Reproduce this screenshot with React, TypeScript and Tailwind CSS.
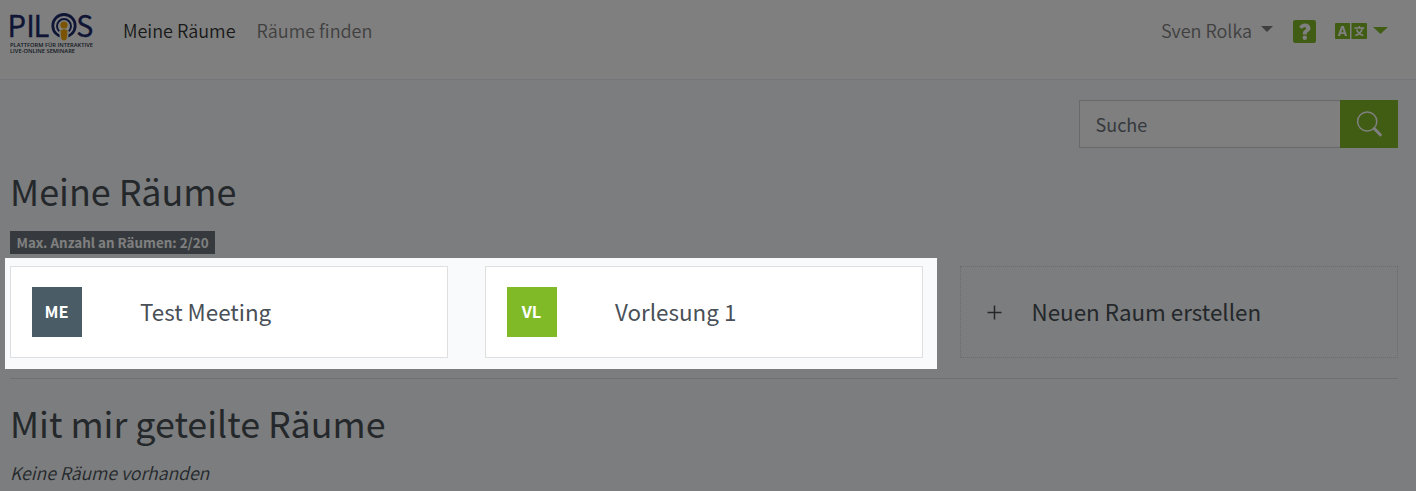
import React from "react";

function Logo() {
  return (
    <svg className="h-[44px] w-[84px] shrink-0 overflow-visible" viewBox="0 0 84 44" aria-label="PILOS">
      <g fill="#1d2a6b" stroke="#1d2a6b" strokeWidth="0.35" fontFamily="'Noto Sans CJK SC', sans-serif" fontWeight="400" fontSize="29.2">
        <text x="-2.5" y="27">P</text>
        <text x="16.200" y="27">I</text>
        <text x="23.400" y="27">L</text>
        <text x="66.300" y="27" textLength="17" lengthAdjust="spacingAndGlyphs">S</text>
      </g>
      <circle cx="54" cy="15.7" r="11.2" fill="none" stroke="#1d2a6b" strokeWidth="2.8" />
      <rect x="49.6" y="22" width="8.8" height="8" fill="#fff" />
      <path d="M49.2 21.2A7 7 0 1 1 58.8 21.2" fill="none" stroke="#1d2a6b" strokeWidth="2" />
      <circle cx="54" cy="15" r="3.6" fill="#f5a800" />
      <path d="M50.5 20.5q3.500-2.400 7 0l-.7 7.500q-.3 2.600-2.800 2.600t-2.800-2.600z" fill="#f5a800" />
      <g fill="#1f3445" fontFamily="'Open Sans', sans-serif" fontWeight="600" fontSize="4.9">
        <text x="0" y="36.7" textLength="83" lengthAdjust="spacingAndGlyphs">PLATTFORM FÜR INTERAKTIVE</text>
        <text x="0" y="43.1" textLength="65" lengthAdjust="spacingAndGlyphs">LIVE-ONLINE SEMINARE</text>
      </g>
    </svg>
  );
}

function Caret({ className }: { className: string }) {
  return (
    <svg className={className} viewBox="0 0 12 6" preserveAspectRatio="none" fill="currentColor">
      <path d="M0 0h12L6 6z" />
    </svg>
  );
}

function Header() {
  return (
    <header className="flex h-20 items-start border-b border-[#eaecf3] bg-white pl-[10px] pr-[28px] text-[18px] font-[350] leading-[30px] text-[#7f7f7f]">
      <div className="pt-[10px]">
        <Logo />
      </div>
      <nav className="ml-[29px] flex gap-[21px] pt-[15px]">
        <a className="text-[#333333]">Meine Räume</a>
        <a>Räume finden</a>
      </nav>
      <div className="ml-auto flex pt-[15px]">
        <span>Sven Rolka</span>
        <Caret className="ml-[9px] mt-[11px] h-[6px] w-[12px]" />
        <svg className="ml-5 mt-[5px] h-[23px] w-[23px] text-[#80ba27]" viewBox="0 0 448 448">
          <rect width="448" height="448" rx="44" fill="currentColor" />
          <path d="M117 137C145 94 181 70 232 70c60 0 108 38 108 91 0 66-70 71-70 107v16h-78v-20c0-64 64-72 64-101 0-15-12-24-30-24-20 0-33 11-49 30z" fill="#fff" />
          <circle cx="230" cy="346" r="44" fill="#fff" />
        </svg>
        <svg className="ml-[19px] mt-2 h-4 w-8 text-[#80ba27]" viewBox="0 0 32 16">
          <path d="M1 0h14v16H1a1 1 0 0 1-1-1V1a1 1 0 0 1 1-1zM16.5 0H31a1 1 0 0 1 1 1v14a1 1 0 0 1-1 1H16.5z" fill="currentColor" />
          <path fillRule="evenodd" d="M6.200 3h2.600l3.300 10H9.800l-.6-2H5.700l-.6 2H2.800zM7.500 5.500 6.300 9.200h2.400z" fill="#fff" />
          <path d="M19.300 5h10M24.300 3v2M27.300 5.500c-.7 3.200-3.600 6-7 7M21.500 6.500c1.200 3 3.700 5 6.800 6" fill="none" stroke="#fff" strokeWidth="1.6" />
        </svg>
        <Caret className="ml-[6px] mt-3 h-[7px] w-[15px] text-[#80ba27]" />
      </div>
    </header>
  );
}

function RoomCard({ code, name, tile }: { code: string; name: string; tile: string }) {
  return (
    <div className="flex h-[92px] items-center border border-[#dfdfdf] bg-white pl-[21px]">
      <div className={`flex h-[50px] w-[50px] items-center justify-center pb-[2px] pr-[1px] text-[16.4px] font-bold text-white ${tile}`}>
        {code}
      </div>
      <div className="ml-[58px] pb-[2px] text-[22.4px] leading-[30px] text-[#495057]">{name}</div>
    </div>
  );
}

export default function App() {
  return (
    <div className="relative h-[491px] overflow-hidden bg-[#f8fafc] font-['Noto_Sans_CJK_SC',sans-serif] text-[#495057]">
      <Header />
      <main className="pl-[10px] pr-[18px] pt-5">
        <div className="flex justify-end">
          <div className="flex h-12 w-[319px]">
            <div className="flex flex-1 items-center border border-r-0 border-[#ced4da] bg-white pl-[15.5px] text-[18px] text-[#6c757d]">Suche</div>
            <button className="flex w-[58px] items-center justify-center bg-[#80ba27]">
              <svg className="h-[26px] w-[26px]" viewBox="0 0 26 26" fill="none" stroke="#fff">
                <circle cx="11.200" cy="10.500" r="9.600" strokeWidth="1.500" />
                <path d="m18.200 17.500 6.100 6.300" strokeWidth="3" strokeLinecap="round" />
              </svg>
            </button>
          </div>
        </div>
        <h1 className="mt-[18px] h-[48px] text-[35.9px] leading-[48px]">Meine Räume</h1>
        <div className="mt-[17px] flex h-[23px] w-[205px] items-center justify-center bg-[#6c757d] text-[13.4px] font-bold text-white">
          Max. Anzahl an Räumen: 2/20
        </div>
        <div className="mt-3 grid grid-cols-3 gap-[37px]">
          <RoomCard code="ME" name="Test Meeting" tile="bg-[#4a5c66]" />
          <RoomCard code="VL" name="Vorlesung 1" tile="bg-[#80ba27]" />
          <div className="flex h-[92px] items-center border border-dotted border-[#d5d7d9] pl-[26px]">
            <svg className="h-[15px] w-[15px]" viewBox="0 0 15 15" stroke="currentColor" strokeWidth="1.500">
              <path d="M7.500 .5v14M.5 7.500h14" />
            </svg>
            <div className="ml-[29.5px] pb-[2px] text-[22.4px] leading-[30px]">Neuen Raum erstellen</div>
          </div>
        </div>
        <hr className="mt-5 border-[#dfe1e3]" />
        <h2 className="mt-[19px] h-[48px] text-[35.8px] leading-[48px]">Mit mir geteilte Räume</h2>
        <p className="mt-[12px] text-[17.6px] font-[350] italic leading-[30px]">Keine Räume vorhanden</p>
      </main>
      <div className="pointer-events-none absolute left-[5px] top-[258px] h-[111px] w-[932px] shadow-[0_0_0_1500px_rgba(0,0,0,0.5)]" />
    </div>
  );
}
